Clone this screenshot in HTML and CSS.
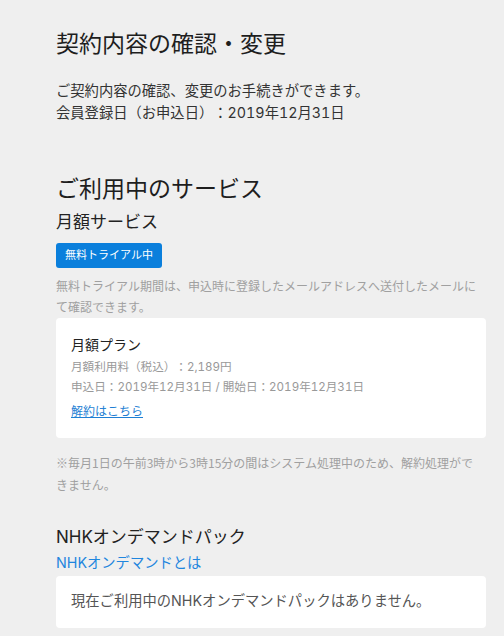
FILE: index.html
```html
<!DOCTYPE html>
<html lang="ja">
<head>
<meta charset="utf-8">
<title>契約内容の確認・変更</title>
<link rel="stylesheet" href="styles.css">
</head>
<body>
<main class="page">
  <section class="intro">
    <h1 class="page-title">契約内容の確認・変更</h1>
    <p class="lead">ご契約内容の確認、変更のお手続きができます。<br>会員登録日（お申込日）：2019年12月31日</p>
  </section>

  <section class="services">
    <h2 class="section-title">ご利用中のサービス</h2>
    <h3 class="service-title">月額サービス</h3>
    <div class="badge-row"><span class="badge">無料トライアル中</span></div>
    <p class="note note-top">無料トライアル期間は、申込時に登録したメールアドレスへ送付したメールにて確認できます。</p>
    <div class="card plan-card">
      <div class="plan-name">月額プラン</div>
      <p class="plan-detail">月額利用料（税込）：2,189円<br>申込日：2019年12月31日 / 開始日：2019年12月31日</p>
      <a class="plan-link" href="#">解約はこちら</a>
    </div>
    <p class="note note-bottom">※毎月1日の午前3時から3時15分の間はシステム処理中のため、解約処理ができません。</p>

    <h3 class="service-title nhk-title">NHKオンデマンドパック</h3>
    <a class="nhk-link" href="#">NHKオンデマンドとは</a>
    <div class="card empty-card">現在ご利用中のNHKオンデマンドパックはありません。</div>
  </section>
</main>
</body>
</html>
```

FILE: styles.css
```css
html, body {
  margin: 0;
  padding: 0;
  background: #efefef;
}
body {
  font-family: Inter, "Noto Sans CJK JP", "Noto Sans", sans-serif;
  font-variant-numeric: tabular-nums;
  text-spacing-trim: space-all;
  color: #222;
}
.page {
  padding: 28px 18px 0 56px;
}
.page-title {
  margin: 0;
  font-size: 23px;
  line-height: 32px;
  font-weight: 400;
  color: #1e1e1e;
}
.lead {
  margin: 20px 0 0;
  font-size: 14.3px;
  line-height: 22px;
  color: #333;
}
.services {
  margin-top: 49px;
}
.section-title {
  margin: 0;
  font-size: 23px;
  line-height: 32px;
  font-weight: 400;
  color: #1e1e1e;
}
.service-title {
  margin: 4px 0 0;
  font-size: 17px;
  line-height: 26px;
  font-weight: 400;
  color: #222;
}
.badge-row {
  margin-top: 8px;
  display: flex;
}
.badge {
  display: block;
  background: #0a7fdc;
  color: #fff;
  font-size: 11px;
  line-height: 25px;
  padding: 0 9px;
  border-radius: 3px;
}
.note {
  margin: 0;
  font-size: 12px;
  line-height: 21px;
  color: #a0a0a0;
}
.note-top {
  margin-top: 8px;
}
.card {
  background: #fff;
  border-radius: 4px;
}
.plan-card {
  padding: 16px 15px 16px;
}
.plan-name {
  font-size: 14px;
  line-height: 22px;
  color: #222;
}
.plan-detail {
  margin: 1px 0 0;
  font-size: 11.6px;
  line-height: 20px;
  color: #999;
}
.plan-link {
  display: inline-block;
  margin-top: 5px;
  font-size: 12px;
  line-height: 20px;
  color: #1f7fd4;
  text-decoration: underline;
}
.note-bottom {
  margin-top: 14px;
  padding-right: 6px;
  line-height: 22px;
  font-family: "Noto Sans CJK JP", sans-serif;
  font-variant-numeric: normal;
}
.nhk-title {
  margin-top: 28px;
}
.nhk-link {
  display: block;
  margin-top: 2px;
  font-size: 14.3px;
  line-height: 22px;
  color: #1f86de;
  text-decoration: none;
}
.empty-card {
  margin-top: 2px;
  padding: 14px 15px 16px;
  font-size: 14.3px;
  line-height: 22px;
  color: #555;
}
```
